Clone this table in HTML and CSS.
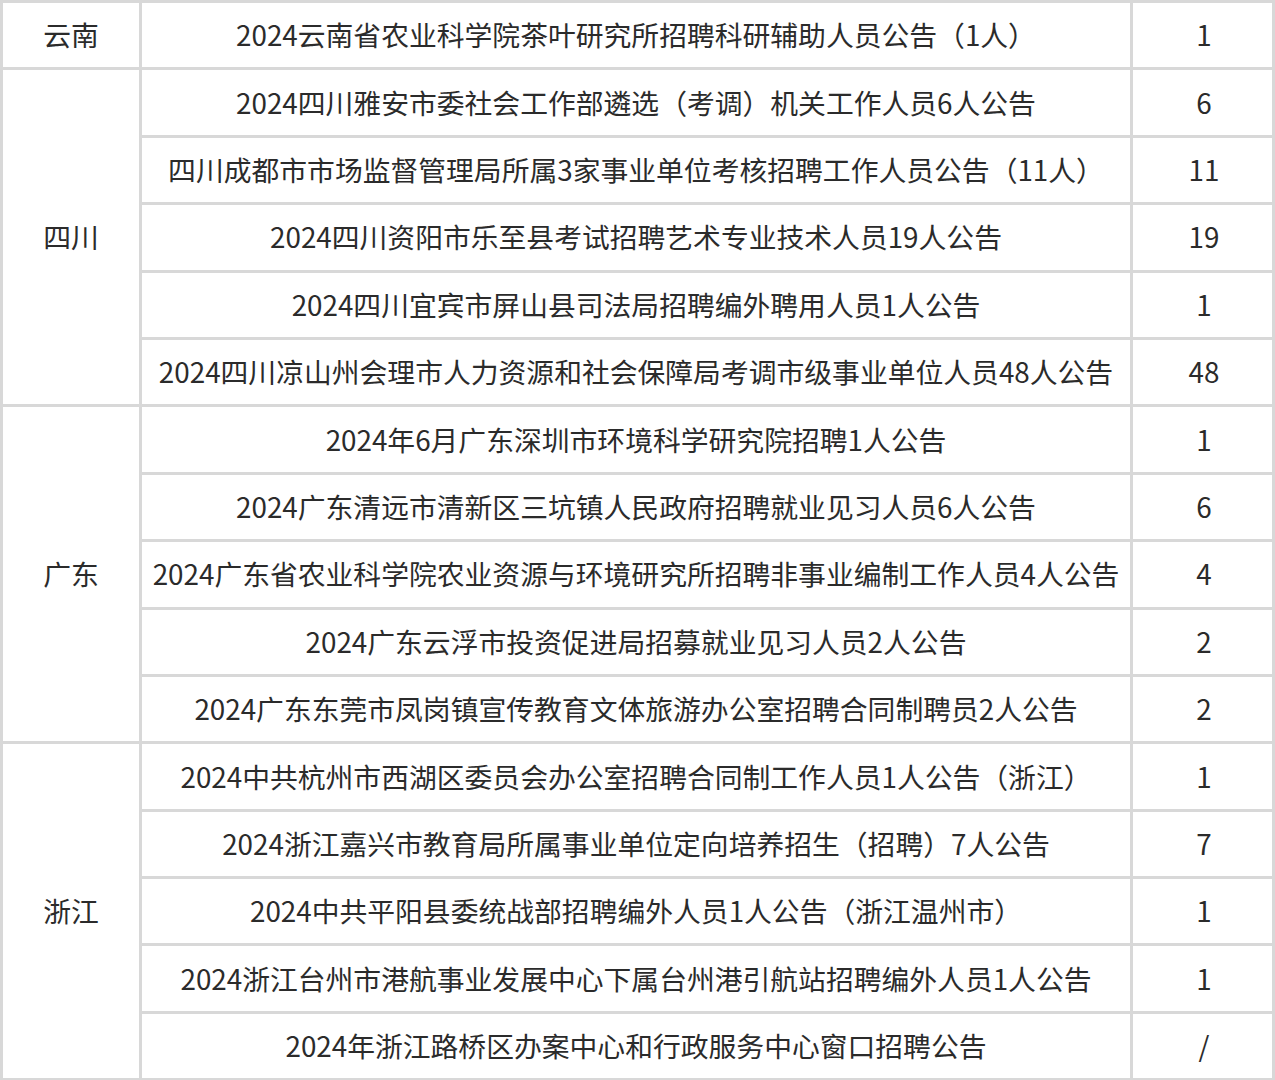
FILE: index.html
```html
<!DOCTYPE html>
<html lang="zh-CN">
<head>
<meta charset="utf-8">
<link rel="stylesheet" href="styles.css">
</head>
<body>
<div class="grid">
  <div class="cell prov r1">云南</div>
  <div class="cell title">2024云南省农业科学院茶叶研究所招聘科研辅助人员公告（1人）</div>
  <div class="cell num">1</div>

  <div class="cell prov r5">四川</div>
  <div class="cell title">2024四川雅安市委社会工作部遴选（考调）机关工作人员6人公告</div>
  <div class="cell num">6</div>
  <div class="cell title">四川成都市市场监督管理局所属3家事业单位考核招聘工作人员公告（11人）</div>
  <div class="cell num">11</div>
  <div class="cell title">2024四川资阳市乐至县考试招聘艺术专业技术人员19人公告</div>
  <div class="cell num">19</div>
  <div class="cell title">2024四川宜宾市屏山县司法局招聘编外聘用人员1人公告</div>
  <div class="cell num">1</div>
  <div class="cell title">2024四川凉山州会理市人力资源和社会保障局考调市级事业单位人员48人公告</div>
  <div class="cell num">48</div>

  <div class="cell prov r5">广东</div>
  <div class="cell title">2024年6月广东深圳市环境科学研究院招聘1人公告</div>
  <div class="cell num">1</div>
  <div class="cell title">2024广东清远市清新区三坑镇人民政府招聘就业见习人员6人公告</div>
  <div class="cell num">6</div>
  <div class="cell title">2024广东省农业科学院农业资源与环境研究所招聘非事业编制工作人员4人公告</div>
  <div class="cell num">4</div>
  <div class="cell title">2024广东云浮市投资促进局招募就业见习人员2人公告</div>
  <div class="cell num">2</div>
  <div class="cell title">2024广东东莞市凤岗镇宣传教育文体旅游办公室招聘合同制聘员2人公告</div>
  <div class="cell num">2</div>

  <div class="cell prov r5">浙江</div>
  <div class="cell title">2024中共杭州市西湖区委员会办公室招聘合同制工作人员1人公告（浙江）</div>
  <div class="cell num">1</div>
  <div class="cell title">2024浙江嘉兴市教育局所属事业单位定向培养招生（招聘）7人公告</div>
  <div class="cell num">7</div>
  <div class="cell title">2024中共平阳县委统战部招聘编外人员1人公告（浙江温州市）</div>
  <div class="cell num">1</div>
  <div class="cell title">2024浙江台州市港航事业发展中心下属台州港引航站招聘编外人员1人公告</div>
  <div class="cell num">1</div>
  <div class="cell title">2024年浙江路桥区办案中心和行政服务中心窗口招聘公告</div>
  <div class="cell num">/</div>
</div>
</body>
</html>
```

FILE: styles.css
```css
html, body {
  margin: 0;
  padding: 0;
  background: #ffffff;
}

body {
  width: 1275px;
  height: 1080px;
  overflow: hidden;
}

.grid {
  display: grid;
  grid-template-columns: 136px 988px 139px;
  grid-template-rows: repeat(16, 64.4px);
  gap: 3px;
  padding: 3px;
  background: #d8d8d8;
  width: 1275px;
  box-sizing: border-box;
  font-family: "Noto Sans CJK SC", "Microsoft YaHei", sans-serif;
  font-size: 27.8px;
  color: #2b2b2b;
}

.cell {
  background: #ffffff;
  display: flex;
  align-items: center;
  justify-content: center;
  white-space: nowrap;
  line-height: 1;
}

.prov {
  grid-column: 1;
}

.r1 {
  grid-row: span 1;
}

.r5 {
  grid-row: span 5;
}

.title {
  grid-column: 2;
}

.num {
  grid-column: 3;
  padding-left: 3px;
}
```
